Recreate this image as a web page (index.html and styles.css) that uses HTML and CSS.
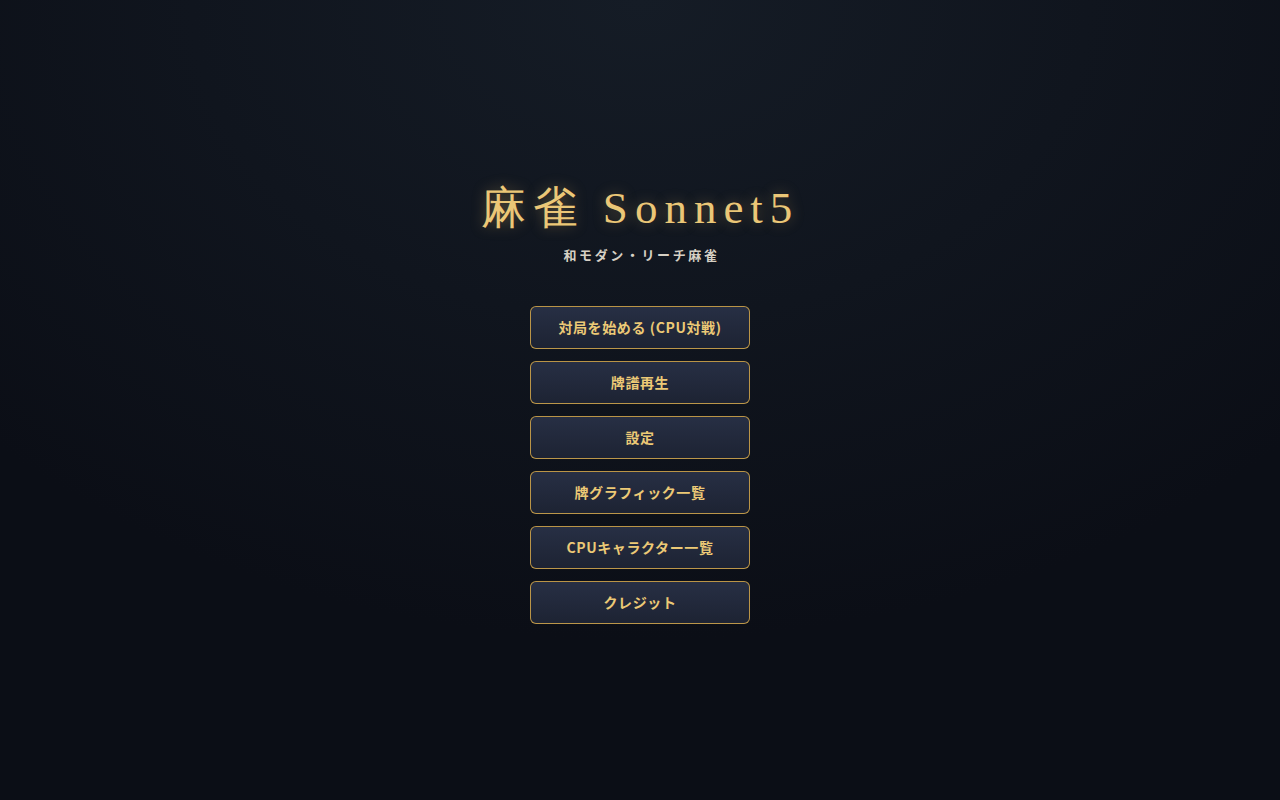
FILE: index.html
```html
<!DOCTYPE html>
<html lang="ja">
<head>
<meta charset="utf-8">
<title>麻雀 Sonnet5</title>
<link rel="stylesheet" href="styles.css">
</head>
<body>
<main class="title-screen">
  <header class="brand">
    <h1 class="brand-title">麻雀 Sonnet5</h1>
    <p class="brand-sub">和モダン・リーチ麻雀</p>
  </header>
  <nav class="menu">
    <button class="menu-btn">対局を始める (CPU対戦)</button>
    <button class="menu-btn">牌譜再生</button>
    <button class="menu-btn">設定</button>
    <button class="menu-btn">牌グラフィック一覧</button>
    <button class="menu-btn">CPUキャラクター一覧</button>
    <button class="menu-btn">クレジット</button>
  </nav>
</main>
</body>
</html>
```

FILE: styles.css
```css
html, body {
  margin: 0;
  height: 100%;
}

body {
  background: radial-gradient(ellipse 70% 80% at 50% 0%, #151c26 0%, #10151e 50%, #0b0e16 100%);
  background-color: #0b0e16;
  font-family: "Noto Sans CJK JP", "Noto Sans", sans-serif;
  overflow: hidden;
}

.title-screen {
  height: 100%;
  display: flex;
  flex-direction: column;
  align-items: center;
  justify-content: center;
  padding-top: 6px;
  box-sizing: border-box;
}

.brand {
  text-align: center;
  margin-bottom: 42px;
}

.brand-title {
  margin: 0;
  font-family: "Liberation Serif", serif;
  font-weight: 400;
  font-size: 45px;
  line-height: 52px;
  letter-spacing: 7px;
  color: #ebc777;
  text-shadow: 0 0 14px rgba(232, 190, 100, 0.35);
}

.brand-sub {
  margin: 12px -3px 0 0;
  font-size: 13px;
  font-weight: 700;
  line-height: 18px;
  letter-spacing: 2.6px;
  color: #d6d0c4;
}

.menu {
  display: flex;
  flex-direction: column;
  gap: 12px;
}

.menu-btn {
  width: 220px;
  height: 43px;
  border: 1px solid rgba(214, 168, 74, 0.85);
  border-radius: 6px;
  background: linear-gradient(180deg, #272f44 0%, #1d2333 100%);
  color: #ecc976;
  font-family: "Noto Sans CJK JP", "Noto Sans", sans-serif;
  font-size: 14px;
  font-weight: 700;
  letter-spacing: 0.6px;
  cursor: pointer;
  padding: 0 0 2px;
}
```
